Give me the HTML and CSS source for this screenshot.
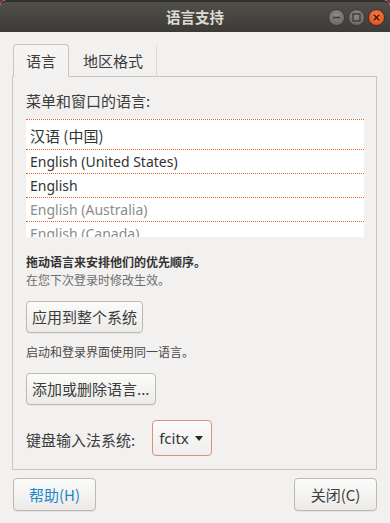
FILE: index.html
```html
<!DOCTYPE html>
<html lang="zh-CN">
<head>
<meta charset="utf-8">
<title>语言支持</title>
<link rel="stylesheet" href="styles.css">
</head>
<body>
<div class="window">
  <header class="titlebar">
    <div class="tb-side"></div>
    <div class="tb-title">语言支持</div>
    <div class="tb-side tb-controls">
      <span class="wbtn wbtn-min"><svg width="17" height="17" viewBox="0 0 17 17"><line x1="5" y1="8.5" x2="12" y2="8.5" stroke="#3a3935" stroke-width="1.4"/></svg></span>
      <span class="wbtn wbtn-max"><svg width="17" height="17" viewBox="0 0 17 17"><rect x="5" y="5" width="7" height="7" fill="none" stroke="#3a3935" stroke-width="1.3"/></svg></span>
      <span class="wbtn wbtn-close"><svg width="17" height="17" viewBox="0 0 17 17"><path d="M5.8 5.8 L11.2 11.2 M11.2 5.8 L5.8 11.2" stroke="#3c1a0c" stroke-width="1.4"/></svg></span>
    </div>
  </header>

  <main class="content">
    <nav class="tabs">
      <div class="tab tab-active">语言</div>
      <div class="tab">地区格式</div>
    </nav>
    <section class="panel">
      <div class="label">菜单和窗口的语言:</div>
      <div class="langlist">
        <div class="row row-first">汉语 (中国)</div>
        <div class="row">English (United States)</div>
        <div class="row">English</div>
        <div class="row row-dim">English (Australia)</div>
        <div class="row row-dim">English (Canada)</div>
      </div>
      <div class="hint hint-bold">拖动语言来安排他们的优先顺序。</div>
      <div class="hint hint-grey">在您下次登录时修改生效。</div>
      <button class="btn btn-apply">应用到整个系统</button>
      <div class="hint hint-note">启动和登录界面使用同一语言。</div>
      <button class="btn btn-add">添加或删除语言...</button>
      <div class="im-row">
        <span class="label im-label">键盘输入法系统:</span>
        <div class="combo"><span>fcitx</span><svg class="caret" width="8" height="5" viewBox="0 0 8 5"><path d="M0 0 L8 0 L4 5 Z" fill="#2b2b2b"/></svg></div>
      </div>
    </section>
    <footer class="actions">
      <button class="btn btn-foot btn-help">帮助(H)</button>
      <button class="btn btn-foot">关闭(C)</button>
    </footer>
  </main>
</div>
</body>
</html>
```
FILE: styles.css
```css
html, body {
  margin: 0;
  padding: 0;
}
body {
  background: #7a2a3a;
  width: 390px;
  height: 523px;
  overflow: hidden;
  font-family: "Noto Sans", "Noto Sans CJK SC", sans-serif;
  color: #3c3c3c;
}
.window {
  background: #f2f1f0;
  height: 523px;
  border-radius: 6px 6px 0 0;
  overflow: hidden;
}
.titlebar {
  height: 32px;
  box-sizing: border-box;
  border-top: 2px solid #2f2e2b;
  background: linear-gradient(#504f4a, #3c3b37);
  display: grid;
  grid-template-columns: 1fr auto 1fr;
  align-items: center;
  border-radius: 6px 6px 0 0;
}
.tb-title {
  font-family: "Noto Sans CJK SC", sans-serif;
  font-weight: bold;
  font-size: 14.5px;
  color: #dfdbd2;
  line-height: 20px;
}
.tb-controls {
  display: flex;
  justify-content: flex-end;
  gap: 3px;
  padding-right: 5px;
}
.wbtn {
  width: 17px;
  height: 17px;
  border-radius: 50%;
  display: block;
  box-sizing: border-box;
}
.wbtn svg { display: block; margin: -1px; }
.wbtn-min, .wbtn-max {
  background: radial-gradient(circle at 50% 35%, #8a8985, #64635f);
  border: 1px solid #3a3935;
}
.wbtn-close {
  background: radial-gradient(circle at 50% 35%, #f57a48, #e04d17);
  border: 1px solid #4a2a1e;
}
.content {
  padding: 12px 13px 0 12px;
}
.tabs {
  display: flex;
  padding-left: 1px;
  height: 33px;
  position: relative;
  z-index: 1;
}
.tab {
  font-family: "Noto Sans CJK SC", sans-serif;
  font-size: 15px;
  line-height: 31px;
  padding: 0 13px 0 14px;
  box-sizing: border-box;
  height: 32px;
  margin-top: 1px;
  border-right: 1px solid #dcd9d5;
  color: #3c3c3c;
}
.tab-active {
  height: 33px;
  margin-top: 0;
  width: 56px;
  padding: 0;
  text-align: center;
  background: linear-gradient(#f6f5f4, #f2f1f0);
  border: 1px solid #c9c5c0;
  border-bottom: none;
  border-radius: 4px 4px 0 0;
}
.panel {
  border: 1px solid #c9c5c0;
  margin-top: -1px;
  height: 394px;
  box-sizing: border-box;
  padding: 14px 12px 0 13px;
  display: flex;
  flex-direction: column;
  align-items: flex-start;
}
.label {
  font-family: "Noto Sans CJK SC", sans-serif;
  font-size: 15px;
  line-height: 20px;
  color: #3c3c3c;
}
.langlist {
  margin-top: 8px;
  align-self: stretch;
  height: 118px;
  background: #ffffff;
  overflow: hidden;
}
.row {
  border-top: 1px dotted #f0641f;
  height: 23px;
  line-height: 23px;
  padding-left: 4px;
  font-size: 14px;
  color: #333333;
  white-space: nowrap;
}
.row-first {
  height: 29px;
  line-height: 31px;
  font-family: "Noto Sans CJK SC", sans-serif;
  font-size: 15px;
}
.row-dim {
  color: #8c8c8c;
}
.hint {
  font-family: "Noto Sans CJK SC", sans-serif;
  font-size: 12px;
  line-height: 18px;
}
.hint-bold {
  margin-top: 16px;
  font-weight: bold;
  color: #333333;
}
.hint-grey {
  color: #6e6e6e;
}
.hint-note {
  margin-top: 10px;
  color: #4a4a4a;
}
.btn {
  font-family: "Noto Sans CJK SC", sans-serif;
  font-size: 15px;
  color: #3c3c3c;
  height: 32px;
  padding: 0 5px;
  border: 1px solid #bdb8b2;
  border-radius: 4px;
  background: linear-gradient(#fbfbfa, #ecebe9);
  box-shadow: 0 1px 0 rgba(0,0,0,0.05);
  line-height: 30px;
  margin: 0;
}
.btn-apply {
  margin-top: 12px;
}
.btn-add {
  margin-top: 12px;
}
.im-row {
  margin-top: 15px;
  display: flex;
  align-items: center;
  gap: 17px;
}
.im-label {
  margin-top: 3px;
}
.combo {
  width: 60px;
  height: 36px;
  box-sizing: border-box;
  border: 1px solid #d9937a;
  border-radius: 4px;
  background: linear-gradient(#fbfbfa, #efeeec);
  display: flex;
  align-items: center;
  justify-content: space-between;
  padding: 0 8px 0 6px;
  font-size: 15px;
  color: #333333;
}
.caret { display: block; margin-top: 1px; }
.actions {
  display: flex;
  justify-content: space-between;
  padding: 8px 0 0 1px;
}
.btn-foot {
  width: 83px;
  height: 33px;
  padding: 0;
}
.btn-help {
  color: #1d87c8;
}
```
